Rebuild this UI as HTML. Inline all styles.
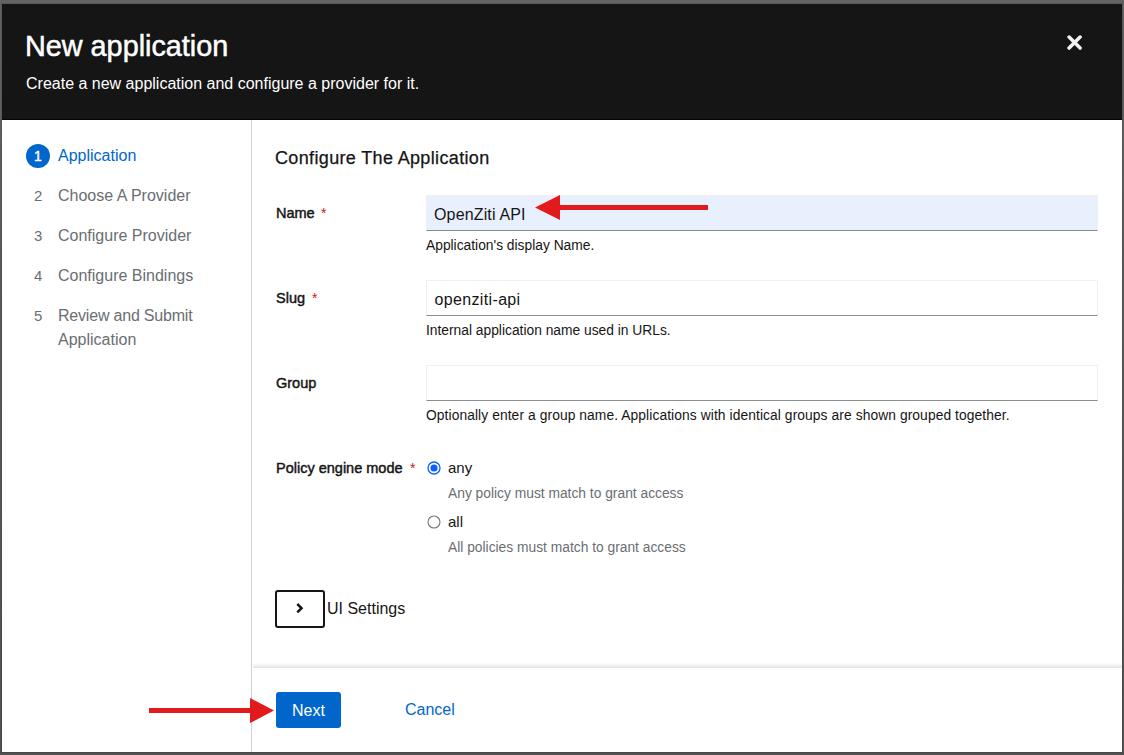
<!DOCTYPE html>
<html>
<head>
<meta charset="utf-8">
<style>
html,body{margin:0;padding:0;}
body{width:1124px;height:755px;overflow:hidden;background:linear-gradient(to bottom,#636363 0px,#5a5a5a 300px,#515151 755px);position:relative;font-family:"Liberation Sans",sans-serif;}
.a{position:absolute;white-space:nowrap;line-height:1;}
#modal{position:absolute;left:2px;top:4px;width:1120px;height:748px;background:#fff;box-shadow:0 0 0 1px rgba(0,0,0,0.1);}
#hdr{position:absolute;left:2px;top:4px;width:1120px;height:115px;background:#151515;border-bottom:1px solid #050505;}
#navline{position:absolute;left:251px;top:120px;width:1px;height:632px;background:#d2d2d2;}
#shadow{position:absolute;left:253px;top:663px;width:869px;height:5px;background:linear-gradient(to bottom,rgba(0,0,0,0),rgba(0,0,0,0.11));}
.inp{position:absolute;left:426px;width:670px;height:34px;border:1px solid #f0f0f0;border-bottom-color:#8a8d90;background:#fff;}
.lbl{font-weight:normal;font-size:14.5px;color:#151515;-webkit-text-stroke:0.45px #151515;}
.req{color:#c9190b;font-size:14px;}
.help{font-size:13.8px;color:#151515;}
.nav{font-size:16px;color:#6a6e73;}
</style>
</head>
<body>
<div id="modal"></div>
<div id="hdr"></div>
<div class="a" style="left:25px;top:32px;font-size:28.8px;color:#fff;-webkit-text-stroke:0.5px #fff;">New application</div>
<div class="a" style="left:26px;top:76px;font-size:16px;color:#fff;">Create a new application and configure a provider for it.</div>
<!-- close X -->
<svg class="a" style="left:1067px;top:35px;" width="15" height="15" viewBox="0 0 15 15"><path d="M2.1 2.1L13.1 13.1M13.1 2.1L2.1 13.1" stroke="#f2f2f2" stroke-width="3.5" stroke-linecap="round"/></svg>

<div id="navline"></div>

<!-- nav -->
<div class="a" style="left:26px;top:144px;width:24px;height:24px;border-radius:50%;background:#0066cc;"></div>
<div class="a" style="left:26px;top:149px;width:24px;text-align:center;font-size:14px;color:#fff;-webkit-text-stroke:0.4px #fff;">1</div>
<div class="a nav" style="left:58px;top:148px;color:#0066cc;">Application</div>
<div class="a nav" style="left:34px;top:188px;font-size:15px;">2</div>
<div class="a nav" style="left:58px;top:188px;">Choose A Provider</div>
<div class="a nav" style="left:34px;top:228px;font-size:15px;">3</div>
<div class="a nav" style="left:58px;top:228px;">Configure Provider</div>
<div class="a nav" style="left:34px;top:268px;font-size:15px;">4</div>
<div class="a nav" style="left:58px;top:268px;">Configure Bindings</div>
<div class="a nav" style="left:34px;top:308px;font-size:15px;">5</div>
<div class="a nav" style="left:58px;top:308px;letter-spacing:-0.2px;">Review and Submit</div>
<div class="a nav" style="left:58px;top:332px;">Application</div>

<!-- content -->
<div class="a" style="left:275px;top:149px;font-size:18px;letter-spacing:0.35px;color:#151515;-webkit-text-stroke:0.25px #151515;">Configure The Application</div>

<div class="a lbl" style="left:276px;top:206px;">Name</div>
<div class="a req" style="left:321px;top:206px;">*</div>
<div class="inp" style="top:195px;background:#e8f0fe;"></div>
<div class="a" style="left:434px;top:207px;font-size:16px;letter-spacing:0.15px;color:#151515;">OpenZiti API</div>
<div class="a help" style="left:426px;top:239px;">Application's display Name.</div>

<div class="a lbl" style="left:276px;top:291px;">Slug</div>
<div class="a req" style="left:312px;top:291px;">*</div>
<div class="inp" style="top:280px;"></div>
<div class="a" style="left:434.5px;top:292px;font-size:16px;letter-spacing:0.35px;color:#151515;">openziti-api</div>
<div class="a help" style="left:426px;top:324px;">Internal application name used in URLs.</div>

<div class="a lbl" style="left:276px;top:376px;">Group</div>
<div class="inp" style="top:365px;"></div>
<div class="a help" style="left:426px;top:409px;letter-spacing:0.09px;">Optionally enter a group name. Applications with identical groups are shown grouped together.</div>

<div class="a lbl" style="left:276px;top:461px;">Policy engine mode</div>
<div class="a req" style="left:410px;top:461px;">*</div>

<!-- radios -->
<svg class="a" style="left:426.5px;top:461px;" width="14" height="14" viewBox="0 0 14 14"><circle cx="7" cy="7" r="6" fill="#fff" stroke="#0b5fff" stroke-width="1.3"/><circle cx="7" cy="7" r="3.6" fill="#0b5fff"/></svg>
<div class="a" style="left:448px;top:460px;font-size:15px;color:#151515;">any</div>
<div class="a help" style="left:448px;top:487px;color:#6a6e73;">Any policy must match to grant access</div>
<svg class="a" style="left:426.5px;top:515px;" width="14" height="14" viewBox="0 0 14 14"><circle cx="7" cy="7" r="6" fill="#fff" stroke="#767676" stroke-width="1.1"/></svg>
<div class="a" style="left:448px;top:514px;font-size:15px;color:#151515;">all</div>
<div class="a help" style="left:448px;top:541px;color:#6a6e73;">All policies must match to grant access</div>

<!-- UI settings -->
<div class="a" style="left:275px;top:590px;width:46px;height:34px;border:2px solid #151515;border-radius:3px;"></div>
<svg class="a" style="left:296px;top:603px;" width="8" height="10" viewBox="0 0 8 10"><path d="M1.3 1L5.5 5.2L1.3 9.4" fill="none" stroke="#151515" stroke-width="2.5"/></svg>
<div class="a" style="left:327px;top:601px;font-size:16px;color:#151515;">UI Settings</div>

<div id="shadow"></div>

<!-- footer -->
<div class="a" style="left:276px;top:692px;width:65px;height:36px;border-radius:3px;background:#0066cc;"></div>
<div class="a" style="left:276px;top:703px;width:65px;text-align:center;font-size:16px;color:#fff;">Next</div>
<div class="a" style="left:405px;top:702px;font-size:16px;color:#0066cc;">Cancel</div>

<!-- arrows -->
<svg class="a" style="left:0;top:0;" width="1124" height="755" viewBox="0 0 1124 755">
<path d="M560 205 L708 205 L708 210 L560 210 Z" fill="#e21a1c"/>
<path d="M535 207.5 L560 195 L560 220 Z" fill="#e21a1c"/>
<path d="M149 708 L250 708 L250 713 L149 713 Z" fill="#e21a1c"/>
<path d="M274 710.5 L250 698 L250 723 Z" fill="#e21a1c"/>
</svg>
</body>
</html>
